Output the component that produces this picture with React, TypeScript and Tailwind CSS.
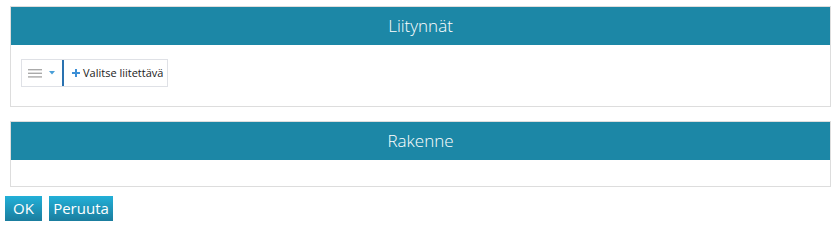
export default function App() {
  return (
    <div className="bg-white w-[837px] h-[228px] pt-[6px]" style={{ fontFamily: '"Open Sans", "Liberation Sans", sans-serif' }}>
      {/* Liitynnät */}
      <div className="ml-[10px] w-[821px] border border-[#dddddd] h-[101px] flex flex-col">
        <div className="h-[38px] bg-[#1c87a6] flex items-center justify-center text-white text-[17px] font-light">
          Liitynnät
        </div>
        <div className="pt-[14px] pl-[10px]">
          <div className="inline-flex items-stretch h-[28px] border border-[#dfe1e6] bg-white">
            <button className="flex items-center gap-[7px] pl-[6px] pr-[7px]">
              <svg width="14" height="9" viewBox="0 0 14 9">
                <rect x="0" y="0" width="14" height="1.4" fill="#aaaaaa" />
                <rect x="0" y="3.6" width="14" height="1.4" fill="#aaaaaa" />
                <rect x="0" y="7.2" width="14" height="1.4" fill="#aaaaaa" />
              </svg>
              <svg width="6" height="4" viewBox="0 0 6 4">
                <path d="M0 0 L6 0 L3 3.5 Z" fill="#4a9fd8" />
              </svg>
            </button>
            <div className="w-[2px] bg-[#2a72b0]" />
            <button className="flex items-center gap-[3px] pl-[8px] pr-[4px] text-[11px] text-[#222222]">
              <svg width="8" height="8" viewBox="0 0 8 8">
                <rect x="3" y="0" width="2" height="8" fill="#3d8fd6" />
                <rect x="0" y="3" width="8" height="2" fill="#3d8fd6" />
              </svg>
              Valitse liitettävä
            </button>
          </div>
        </div>
      </div>

      {/* Rakenne */}
      <div className="ml-[10px] w-[821px] mt-[14px] border border-[#dddddd] h-[66px] flex flex-col">
        <div className="h-[38px] bg-[#1c87a6] flex items-center justify-center text-white text-[17px] font-light">
          Rakenne
        </div>
      </div>

      <div className="flex gap-[7px] pl-[5px] mt-[9px]">
        <button className="h-[25px] w-[37px] text-white text-[15px] bg-gradient-to-b from-[#22b0d8] to-[#1a7d9e]">OK</button>
        <button className="h-[25px] w-[64px] text-white text-[15px] bg-gradient-to-b from-[#22b0d8] to-[#1a7d9e]">Peruuta</button>
      </div>
    </div>
  )
}
